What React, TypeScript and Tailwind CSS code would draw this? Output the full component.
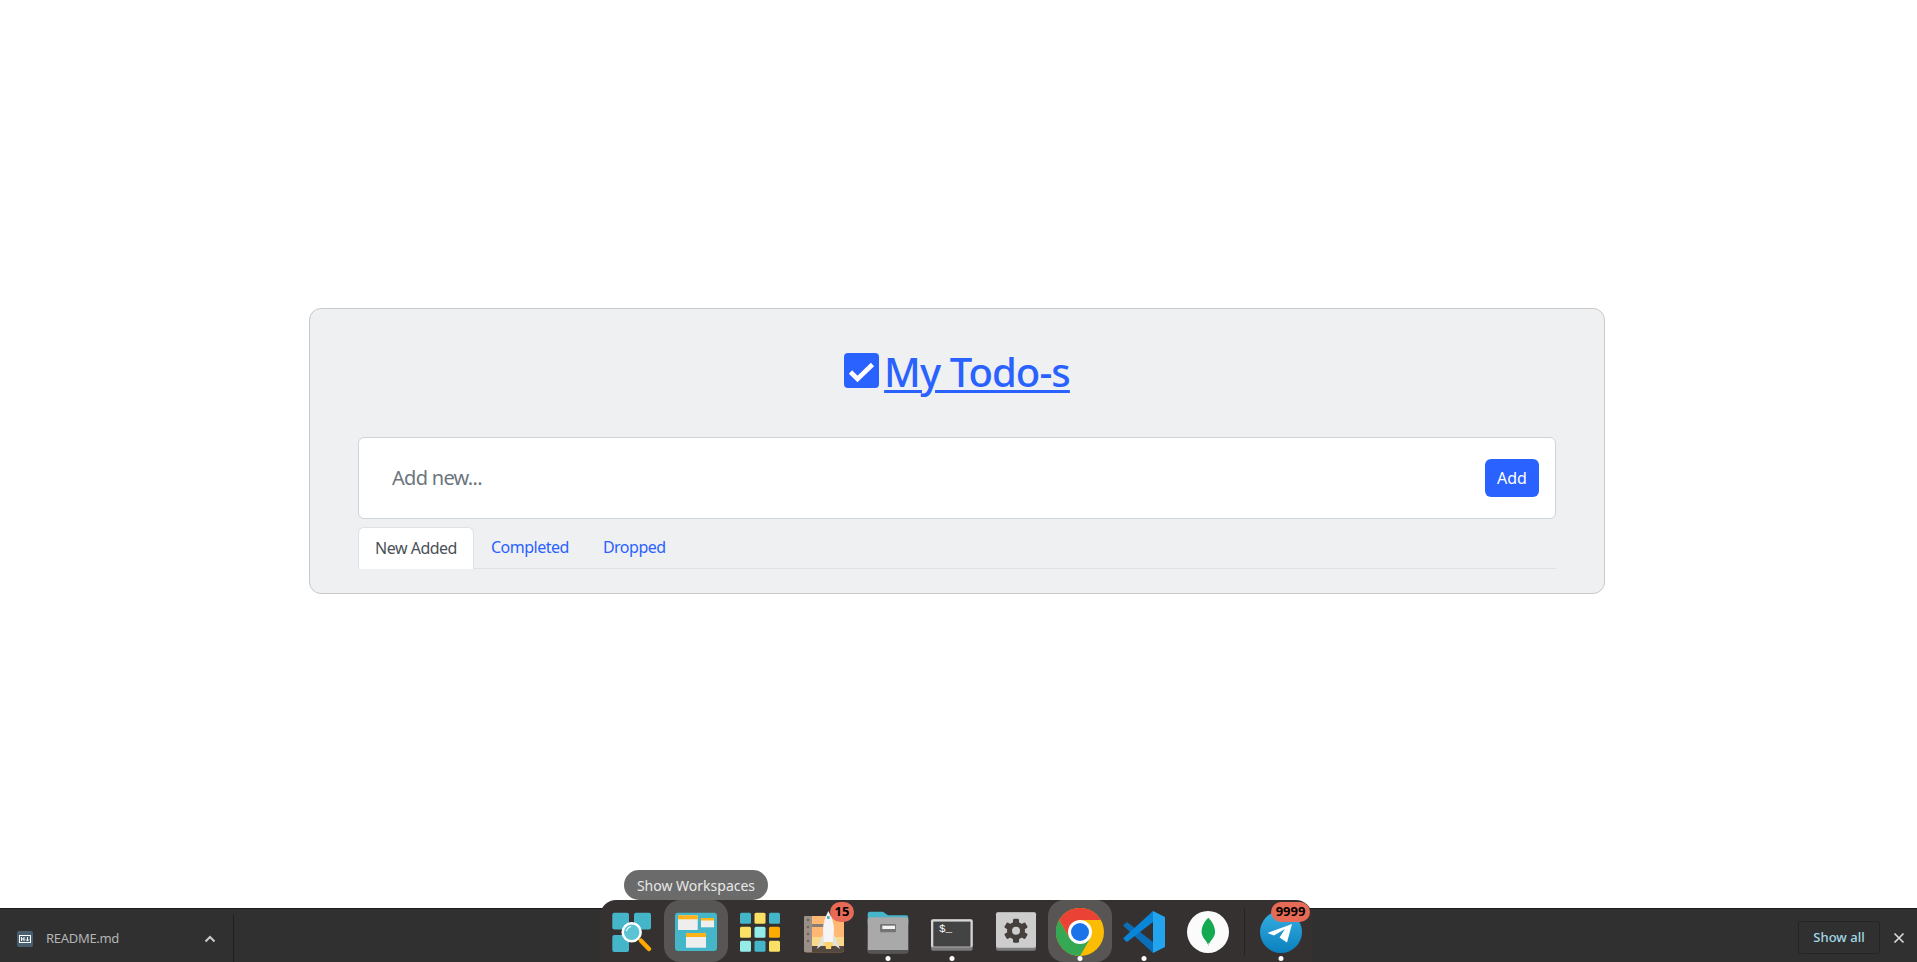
const font = "font-['Noto_Sans',sans-serif]";

const SearchIcon = () => (
  <svg width="44" height="44" viewBox="0 0 44 44">
    <rect x="2.3" y="2.7" width="16.7" height="16.7" rx="2" fill="#45b6c9" />
    <rect x="24" y="2.7" width="17" height="16.7" rx="2" fill="#45b6c9" />
    <rect x="2.3" y="25" width="16.7" height="17" rx="2" fill="#45b6c9" />
    <circle cx="21.7" cy="22.3" r="9" fill="#5cc3d4" stroke="#fff" strokeWidth="2.5" />
    <path d="M16.5 21 A6 6 0 0 1 21 16.5" fill="none" stroke="#fff" strokeWidth="1.2" />
    <path d="M31 30.7 L39 39" stroke="#ffa800" strokeWidth="4.5" strokeLinecap="round" />
  </svg>
);

const WorkspacesIcon = () => (
  <svg width="44" height="44" viewBox="0 0 44 44">
    <rect x="1" y="2.7" width="42" height="38.3" rx="3" fill="#45b6c9" />
    <rect x="4" y="5.3" width="19.7" height="14.7" fill="#eee" />
    <rect x="4" y="5.3" width="19.7" height="4" fill="#ffb31a" />
    <rect x="27" y="8" width="13" height="9.3" fill="#eee" />
    <rect x="27" y="8" width="13" height="2.5" fill="#ffb31a" />
    <rect x="12" y="23" width="20" height="14.7" fill="#eee" />
    <rect x="12" y="23" width="20" height="4" fill="#ffb31a" />
  </svg>
);

const gridColors = ['#45b6c9', '#fbe066', '#45b6c9', '#fbe066', '#94ece9', '#ffab00', '#94ece9', '#45b6c9', '#fbe066'];

const AppsIcon = () => (
  <svg width="44" height="44" viewBox="0 0 44 44">
    {gridColors.map((c, i) => (
      <rect key={i} x={2 + (i % 3) * 14.5} y={2.7 + Math.floor(i / 3) * 14} width="11" height="11" rx="1.5" fill={c} />
    ))}
  </svg>
);

const RocketIcon = () => (
  <svg width="44" height="44" viewBox="0 0 44 44">
    <rect x="2" y="6" width="40" height="36.3" rx="2" fill="#ffb874" />
    <rect x="2" y="27" width="40" height="9" fill="#f9d98c" />
    <path d="M2 36 H42 V40.3 a2 2 0 0 1-2 2 H4 a2 2 0 0 1-2-2 Z" fill="#54473f" />
    <path d="M4 6 H10 V42.3 H4 a2 2 0 0 1-2-2 V8 a2 2 0 0 1 2-2 Z" fill="#9a9088" />
    <rect x="10" y="14" width="14" height="3" fill="#877d76" />
    <circle cx="6" cy="10" r="1.3" fill="#6d645e" />
    <circle cx="6" cy="17" r="1.3" fill="#6d645e" />
    <circle cx="6" cy="24" r="1.3" fill="#6d645e" />
    <circle cx="6" cy="31" r="1.3" fill="#6d645e" />
    <path d="M26.3 1 C30 7 32 14 32 20 L31 32 L21.5 32 L21 20 C21 14 23 7 26.3 1 Z" fill="#f5f5f5" />
    <path d="M21 24 L14.7 39 L21.5 34 Z M32 24 L38 39 L31 34 Z" fill="#e2e2e2" />
    <rect x="25" y="6" width="2.6" height="3" fill="#45b6c9" />
    <path d="M23 32 h7 l-1 7 h-5 Z" fill="#fbd36b" />
  </svg>
);

const FolderIcon = () => (
  <svg width="44" height="44" viewBox="0 0 44 44">
    <path d="M1.7 4 a2.3 2.3 0 0 1 2.3-2.3 h13 l5 3.6 h18 a2.3 2.3 0 0 1 2.3 2.3 v6 H1.7 Z" fill="#45b6c9" />
    <rect x="1.7" y="7.3" width="40.6" height="36" rx="3" fill="#a9a9a9" />
    <path d="M1.7 40 H42.3 A3.3 3.3 0 0 1 39 43.3 H5 A3.3 3.3 0 0 1 1.7 40 Z" fill="#555" />
    <rect x="14" y="14" width="16" height="8.3" rx="1" fill="#747474" />
    <rect x="16.3" y="15.7" width="12.7" height="3.3" fill="#f5f5f5" />
  </svg>
);

const TerminalIcon = () => (
  <svg width="44" height="44" viewBox="0 0 44 44">
    <rect x="1" y="9.3" width="41.7" height="31.4" rx="2" fill="#7a7a7a" />
    <rect x="1" y="9.3" width="41.7" height="28" rx="2" fill="#d6d6d6" />
    <rect x="3.3" y="11.6" width="37.2" height="25" fill="#434343" />
  </svg>
);

const SettingsIcon = () => (
  <svg width="44" height="44" viewBox="0 0 44 44">
    <rect x="2" y="2.3" width="40" height="38.4" rx="2" fill="#7c7c7c" />
    <rect x="2" y="2.3" width="40" height="35.4" rx="2" fill="#cdcdcd" />
    <g transform="translate(22 20.7)" fill="#46403d">
      {[0, 60, 120].map(a => (
        <rect key={a} x="-3" y="-12" width="6" height="24" rx="1.2" transform={`rotate(${a})`} />
      ))}
      <circle r="9" />
      <circle r="4" fill="#cdcdcd" />
    </g>
  </svg>
);

const ChromeIcon = () => (
  <svg width="48" height="48" viewBox="0 0 48 48">
    <circle cx="24" cy="24" r="24" fill="#fbbc04" />
    <path d="M13.6 30 L3.2 12 A24 24 0 0 0 24 48 L34.4 30 Z" fill="#34a853" />
    <path d="M24 24 L13.6 30 L3.2 12 A24 24 0 0 1 44.8 12 H24 Z" fill="#ea4335" />
    <circle cx="24" cy="24" r="12" fill="#fff" />
    <circle cx="24" cy="24" r="9" fill="#1a73e8" />
  </svg>
);

const VscodeIcon = () => (
  <svg width="44" height="44" viewBox="0 0 44 44">
    <path d="M31 43 L31 32 L5 12 L1.5 15 V16 Z" fill="#0a6fb8" />
    <path d="M31 1 L31 12 L5 32 L1.5 29 V28 Z" fill="#0a86d8" />
    <path d="M31 1 L43 7 V37 L31 43 Z" fill="#23a4ef" />
  </svg>
);

const MongoIcon = () => (
  <svg width="42" height="42" viewBox="0 0 42 42">
    <circle cx="21" cy="21" r="21" fill="#fbfbfb" />
    <path d="M21.3 6.7 C26 11 28.5 17 28 22 C27.4 27 23.5 29.5 22 33 L20.7 33 C19.3 29.5 15.3 27 14.7 22 C14.2 17 16.5 11 21.3 6.7 Z" fill="#13aa52" />
    <rect x="20.9" y="32" width="0.9" height="3" fill="#b8c4c2" />
  </svg>
);

const TelegramIcon = () => (
  <svg width="42" height="42" viewBox="0 0 42 42">
    <defs>
      <linearGradient id="tg" x1="0" y1="0" x2="0" y2="1">
        <stop offset="0" stopColor="#37aee2" />
        <stop offset="1" stopColor="#0a80bd" />
      </linearGradient>
    </defs>
    <circle cx="21" cy="21" r="21" fill="url(#tg)" />
    <path d="M7.5 22 L32 13 L27 31.5 L19.5 26.5 L25 18 L14 24.5 Z" fill="#fff" />
  </svg>
);

const Badge = ({ children, className }: { children: string; className: string }) => (
  <span className={`absolute flex items-center justify-center rounded-full bg-[#e66a55] text-[13px] font-bold text-black ${className}`}>
    {children}
  </span>
);

const DockItem = ({ children, active, running }: { children: React.ReactNode; active?: boolean; running?: boolean }) => (
  <div className={`relative flex h-[62px] w-16 shrink-0 items-center justify-center pt-[2px] ${active ? 'rounded-[16px] bg-[#585654]' : ''}`}>
    {children}
    {running && <span className="absolute bottom-[1px] left-1/2 h-[5px] w-[5px] -translate-x-1/2 rounded-full bg-white" />}
  </div>
);

export default function App() {
  return (
    <div className={`flex h-screen flex-col overflow-hidden bg-white ${font}`}>
      <main className="flex-1 pt-[308px]">
        <div className="ml-[309px] h-[286px] w-[1296px] rounded-xl border border-[#c8c9ca] bg-[#eff0f2] px-[48px] pt-[39px]">
          <h1 className="flex items-center justify-center gap-[5px] text-[40px] leading-[48px]">
            <svg width="35" height="35" viewBox="0 0 35 35" className="mb-[3px]">
              <rect width="35" height="35" rx="4" fill="#2962ff" />
              <path d="M6.5 19 L13.5 26 L28.5 11.5" fill="none" stroke="#fff" strokeWidth="4.6" />
            </svg>
            <a href="#" className="font-medium tracking-[-0.9px] text-[#2962ff] underline decoration-[3px] underline-offset-[3px]">My Todo-s</a>
          </h1>
          <div className="mt-[41px] flex h-[82px] items-center rounded-md border border-[#ced4da] bg-white pr-[16px] pl-[33px]">
            <span className="flex-1 text-[20px] tracking-[-0.7px] text-[#6c757d]">Add new...</span>
            <button className="h-[38px] w-[54px] rounded-md bg-[#2962ff] text-[16px] text-white">Add</button>
          </div>
          <nav className="mt-[8px] flex h-[42px] border-b border-[#dee2e6] text-[16px] tracking-[-0.5px]">
            <a className="flex h-[42px] w-[116px] items-center justify-center rounded-t-md border border-b-0 border-[#dee2e6] bg-white pb-[2px] text-[#495057]">New Added</a>
            <a className="flex h-[41px] items-center px-[17px] pb-[1px] text-[#2962ff]">Completed</a>
            <a className="flex h-[41px] items-center px-[17px] pb-[1px] text-[#2962ff]">Dropped</a>
          </nav>
        </div>
      </main>

      <footer className="relative flex h-[54px] shrink-0 items-end border-t border-[#1c1c1c] bg-[#303030]">
        <div className="flex h-[47px] w-[234px] items-center border-r border-[#1f1f1f] pr-[17px] pl-[17px] text-[#b5b5b5]">
          <span className="flex h-4 w-4 items-center justify-center rounded-[2px] bg-[#4a6070]">
            <svg width="12" height="8" viewBox="0 0 12 8"><rect x="0.5" y="0.5" width="11" height="7" fill="none" stroke="#fff" /><path d="M2.5 2v4M5 2v4M2.5 4H5M8.5 2v4M7 4.5l1.5 1.5L10 4.5" fill="none" stroke="#fff" /></svg>
          </span>
          <span className="ml-[13px] flex-1 text-[13px] tracking-[-0.3px]">README.md</span>
          <svg width="12" height="8" viewBox="0 0 12 8"><path d="M1.5 6.5 L6 2 L10.5 6.5" fill="none" stroke="#cccccc" strokeWidth="2" /></svg>
        </div>
        <div className="ml-auto flex items-center pb-[8px]">
          <span className="flex h-[33px] w-[82px] items-center justify-center rounded-[3px] border border-[#242424] text-[13px] font-medium text-[#a3d9e8]">Show all</span>
          <svg width="12" height="12" viewBox="0 0 12 12" className="mr-[12px] ml-[13px]"><path d="M1.5 1.5 L10.5 10.5 M10.5 1.5 L1.5 10.5" stroke="#ddd" strokeWidth="1.6" /></svg>
        </div>

        <div className="absolute bottom-0 left-[600px] flex h-[62px] w-[712px] items-start rounded-t-[16px] bg-[#353131]">
          <DockItem><SearchIcon /></DockItem>
          <DockItem active><WorkspacesIcon /></DockItem>
          <DockItem><AppsIcon /></DockItem>
          <DockItem>
            <RocketIcon />
            <Badge className="top-[2px] right-[2px] h-[20px] w-[24px]">15</Badge>
          </DockItem>
          <DockItem running><FolderIcon /></DockItem>
          <DockItem running>
            <TerminalIcon />
            <span className="absolute top-[24px] left-[19px] font-['Liberation_Mono',monospace] text-[11px] leading-none text-white">$_</span>
          </DockItem>
          <DockItem><SettingsIcon /></DockItem>
          <DockItem active running><ChromeIcon /></DockItem>
          <DockItem running><VscodeIcon /></DockItem>
          <DockItem><MongoIcon /></DockItem>
          <div className="mx-[4px] mt-[8px] h-[48px] w-px shrink-0 bg-[#252222]" />
          <DockItem running>
            <TelegramIcon />
            <Badge className="top-[2px] right-[3px] h-[20px] w-[39px]">9999</Badge>
          </DockItem>
        </div>

        <div className="absolute bottom-[62px] left-[624px] flex h-[30px] w-[144px] items-center justify-center rounded-full bg-[#6b6b6b] text-[14px] text-[#e8e8e8]">
          Show Workspaces
        </div>
      </footer>
    </div>
  );
}
